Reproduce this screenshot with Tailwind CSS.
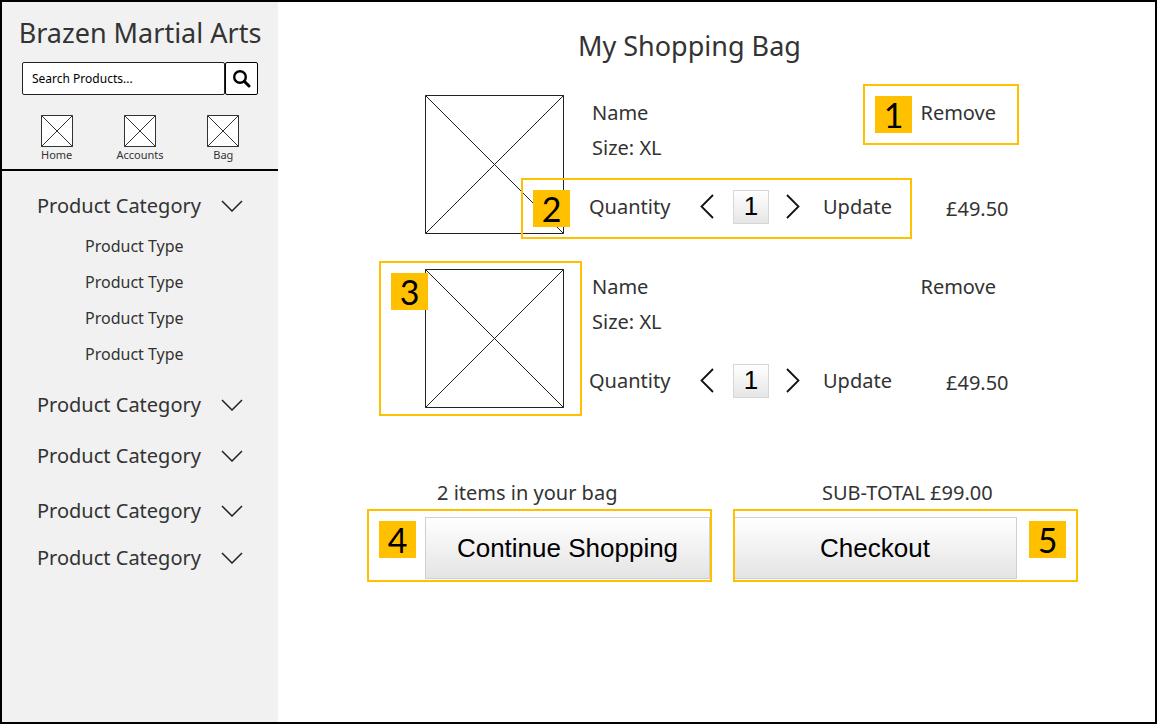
<!DOCTYPE html>
<html lang="en">
<head>
<meta charset="utf-8">
<meta name="viewport" content="width=device-width, initial-scale=1">
<title>Brazen Martial Arts - My Shopping Bag</title>
<script src="https://cdn.jsdelivr.net/npm/@tailwindcss/browser@4"></script>
</head>
<body class="bg-white font-['Noto_Sans',sans-serif] text-[#333]">
<svg class="hidden" aria-hidden="true">
  <symbol id="placeholder" viewBox="0 0 139 139"><path d="M.5.5h138v138H.5zl138 138M138.500.5l-138 138" fill="#fff" stroke="#222"/></symbol>
  <symbol id="thumb" viewBox="0 0 32 32"><path d="M.5.5h31v31H.5zl31 31M31.500.5l-31 31" fill="#fff" stroke="#333"/></symbol>
  <symbol id="down" viewBox="0 0 22 12"><path d="M1 1l10 10L21 1" fill="none" stroke="#222" stroke-width="1.500"/></symbol>
  <symbol id="left" viewBox="0 0 14 25"><path d="M13 1L1.500 12.500L13 24" fill="none" stroke="#111" stroke-width="1.800"/></symbol>
  <symbol id="right" viewBox="0 0 14 25"><path d="M1 1l11.500 11.500L1 24" fill="none" stroke="#111" stroke-width="1.800"/></symbol>
</svg>
<div class="flex min-h-screen border-2 border-black">
  <aside class="w-[276px] shrink-0 bg-[#f1f1f1]">
    <header class="border-b-2 border-black pb-[6px]">
      <h1 class="pt-[11px] text-center text-[27px] leading-10 whitespace-nowrap">Brazen Martial Arts</h1>
      <form class="mt-[9px] mr-5 ml-5 flex h-[33px]">
        <input type="search" aria-label="Search products" placeholder="Search Products..." class="min-w-0 flex-1 rounded-xs border border-[#222] bg-white px-[9px] text-[12px] text-black placeholder:text-black">
        <button type="button" aria-label="Search" class="flex w-[33px] items-center justify-center rounded-xs border border-black bg-white">
          <svg class="size-[18px]" viewBox="0 0 18 18" fill="none" stroke="#000"><circle cx="7" cy="7" r="5.800" stroke-width="2.400"/><path d="M11.500 11.500l4.500 4.500" stroke-width="3" stroke-linecap="round"/></svg>
        </button>
      </form>
      <nav class="mt-5 ml-[13px] flex w-[250px] justify-between text-[11px] leading-4">
        <a href="#" class="flex w-[84px] flex-col items-center"><svg class="size-8"><use href="#thumb"/></svg>Home</a>
        <a href="#" class="flex w-[84px] flex-col items-center"><svg class="size-8"><use href="#thumb"/></svg>Accounts</a>
        <a href="#" class="flex w-[84px] flex-col items-center"><svg class="size-8"><use href="#thumb"/></svg>Bag</a>
      </nav>
    </header>
    <nav class="pt-[19px] pr-[35px] pl-[35px] text-[20px] leading-8">
      <button type="button" aria-expanded="true" class="flex w-full items-center justify-between">Product Category<svg class="h-3 w-[22px]"><use href="#down"/></svg></button>
      <ul class="mt-[6px] mb-[17px] pl-12 text-[16px] leading-9">
        <li><a href="#">Product Type</a></li>
        <li><a href="#">Product Type</a></li>
        <li><a href="#">Product Type</a></li>
        <li><a href="#">Product Type</a></li>
      </ul>
      <button type="button" class="flex w-full items-center justify-between">Product Category<svg class="h-3 w-[22px]"><use href="#down"/></svg></button>
      <button type="button" class="mt-[19px] flex w-full items-center justify-between">Product Category<svg class="h-3 w-[22px]"><use href="#down"/></svg></button>
      <button type="button" class="mt-[23px] flex w-full items-center justify-between">Product Category<svg class="h-3 w-[22px]"><use href="#down"/></svg></button>
      <button type="button" class="mt-[15px] flex w-full items-center justify-between">Product Category<svg class="h-3 w-[22px]"><use href="#down"/></svg></button>
    </nav>
  </aside>

  <main class="min-w-0 flex-1 pt-6 pl-[147px]">
    <div class="max-w-[591px]">
      <h2 class="pl-[153px] text-[27px] leading-10">My Shopping Bag</h2>

      <article class="relative mt-[29px] flex gap-[25px]">
        <svg class="size-[139px] shrink-0"><use href="#placeholder"/></svg>
        <div class="flex-1 text-[20px]">
          <div class="flex justify-between pr-5 pl-[3px] leading-[35px]">
            <div><h3>Name</h3><p>Size: XL</p></div>
            <button type="button" class="relative z-10 self-start">Remove</button>
          </div>
          <div class="relative z-10 mt-[22px] grid grid-cols-[111px_33px_53px_37px_123px_auto] items-center leading-[35px]">
            <label for="qty1">Quantity</label>
            <button type="button" aria-label="Decrease quantity"><svg class="h-[25px] w-[14px]"><use href="#left"/></svg></button>
            <input id="qty1" value="1" class="h-[34px] w-9 border border-[#d6d6d6] bg-linear-to-b from-white to-[#e6e6e6] text-center font-['Liberation_Sans',sans-serif] text-[26px] text-black">
            <button type="button" aria-label="Increase quantity"><svg class="h-[25px] w-[14px]"><use href="#right"/></svg></button>
            <button type="button" class="text-left">Update</button>
            <span class="pt-1">£49.50</span>
          </div>
        </div>
        <div class="absolute -top-[11px] left-[438px] h-[61px] w-[156px] border-2 border-[#ffc000] p-[10px]">
          <span class="block size-[37px] bg-[#ffc000] text-center font-['Lato',sans-serif] text-[34px] leading-[37px] text-black">1</span>
        </div>
        <div class="absolute top-[83px] left-24 h-[61px] w-[391px] border-2 border-[#ffc000] p-[10px]">
          <span class="block size-[37px] bg-[#ffc000] text-center font-['Lato',sans-serif] text-[34px] leading-[37px] text-black">2</span>
        </div>
      </article>

      <article class="relative mt-[35px] flex gap-[25px]">
        <svg class="size-[139px] shrink-0"><use href="#placeholder"/></svg>
        <div class="flex-1 text-[20px]">
          <div class="flex justify-between pr-5 pl-[3px] leading-[35px]">
            <div><h3>Name</h3><p>Size: XL</p></div>
            <button type="button" class="self-start">Remove</button>
          </div>
          <div class="mt-[22px] grid grid-cols-[111px_33px_53px_37px_123px_auto] items-center leading-[35px]">
            <label for="qty2">Quantity</label>
            <button type="button" aria-label="Decrease quantity"><svg class="h-[25px] w-[14px]"><use href="#left"/></svg></button>
            <input id="qty2" value="1" class="h-[34px] w-9 border border-[#d6d6d6] bg-linear-to-b from-white to-[#e6e6e6] text-center font-['Liberation_Sans',sans-serif] text-[26px] text-black">
            <button type="button" aria-label="Increase quantity"><svg class="h-[25px] w-[14px]"><use href="#right"/></svg></button>
            <button type="button" class="text-left">Update</button>
            <span class="pt-1">£49.50</span>
          </div>
        </div>
        <div class="absolute -top-2 -left-[46px] h-[155px] w-[203px] border-2 border-[#ffc000] p-[10px]">
          <span class="block size-[37px] bg-[#ffc000] text-center font-['Lato',sans-serif] text-[34px] leading-[37px] text-black">3</span>
        </div>
      </article>

      <footer class="relative mt-[69px] grid grid-cols-[285px_284px] gap-x-[23px] gap-y-2">
        <p class="pl-3 text-[20px] leading-8">2 items in your bag</p>
        <p class="pl-[89px] text-[20px] leading-8 whitespace-nowrap">SUB-TOTAL £99.00</p>
        <button type="button" class="h-[62px] border border-[#d0d0d0] bg-linear-to-b from-white to-[#e4e4e4] font-['Liberation_Sans',sans-serif] text-[26px] text-black">Continue Shopping</button>
        <button type="button" class="h-[62px] border border-[#d0d0d0] bg-linear-to-b from-white to-[#e4e4e4] font-['Liberation_Sans',sans-serif] text-[26px] text-black">Checkout</button>
        <div class="pointer-events-none absolute top-8 -left-[58px] h-[73px] w-[345px] border-2 border-[#ffc000] p-[10px]">
          <span class="block size-[37px] bg-[#ffc000] text-center font-['Lato',sans-serif] text-[34px] leading-[37px] text-black">4</span>
        </div>
        <div class="pointer-events-none absolute top-8 left-[308px] flex h-[73px] w-[345px] justify-end border-2 border-[#ffc000] p-[10px]">
          <span class="block size-[37px] bg-[#ffc000] text-center font-['Lato',sans-serif] text-[34px] leading-[37px] text-black">5</span>
        </div>
      </footer>
    </div>
  </main>
</div>
</body>
</html>
